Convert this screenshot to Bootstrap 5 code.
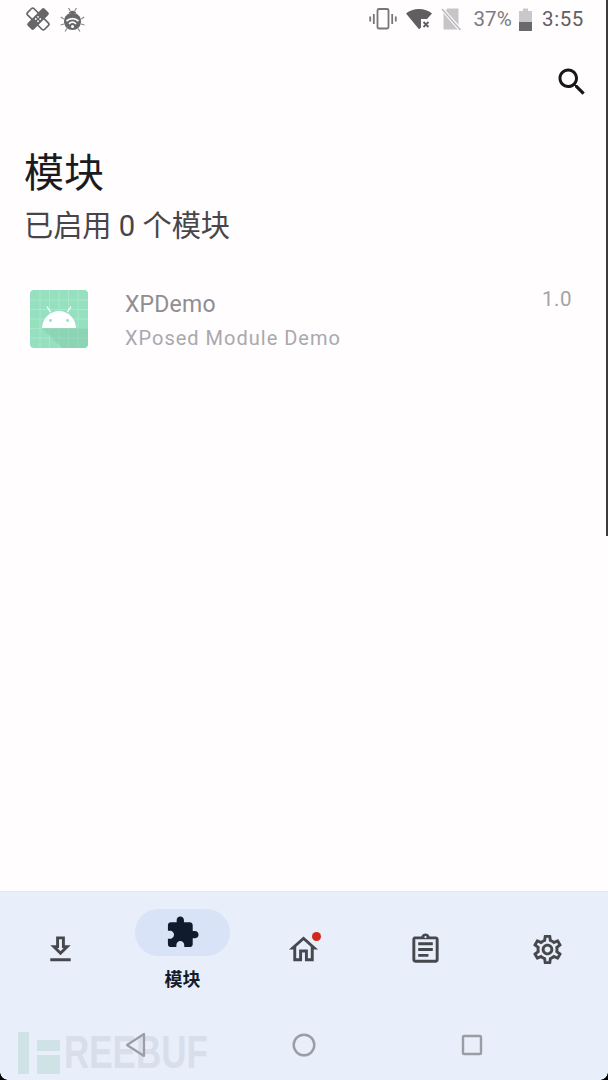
<!DOCTYPE html>
<html lang="zh-CN">
<head>
  <meta charset="UTF-8">
  <title>模块</title>
  <link href="https://cdn.jsdelivr.net/npm/bootstrap@5.3.3/dist/css/bootstrap.min.css" rel="stylesheet">
  <style>
    html, body { height: 100%; }
    body {
      background: #fffdfe;
      font-family: Roboto, "Noto Sans CJK SC", sans-serif;
      overflow: hidden;
    }
    .screen { height: 1080px; width: 608px; }

    /* status bar */
    .status-bar { height: 38px; padding: 0 24px 0 26px; font-size: 20.5px; color: #7b7b7d; }
    .status-bug { margin-left: 10px; }
    .status-time { color: #5f5f61; font-weight: 400; letter-spacing: .6px; }
    .status-pct { margin-left: 11px; letter-spacing: .2px; }
    .status-batt { margin: 0 10px 0 7px; }

    /* header */
    .tool-row { height: 88px; padding-right: 18px; }
    .page-title { font-family: "Noto Sans CJK SC", sans-serif; font-size: 40px; line-height: 54px; color: #1b1b1f; font-weight: 400; margin: 17px 0 0 24px; }
    .page-sub { font-family: Roboto, "Noto Sans CJK SC", sans-serif; font-size: 29.2px; line-height: 40px; color: #46464a; margin: 9px 0 0 24px; }

    /* module row */
    .module-row { margin-top: 43px; padding: 0 36px 0 29px; }
    .module-body { margin-left: 36px; }
    .module-name { font-size: 23px; line-height: 30px; color: #8e8e90; margin-top: 1px; letter-spacing: .2px; }
    .module-desc { font-size: 20px; line-height: 28px; color: #a9a9ad; margin-top: 4px; letter-spacing: 1px; }
    .module-ver { font-size: 20.5px; line-height: 28px; color: #a3a3a6; letter-spacing: .5px; margin-top: -4px; }

    /* bottom nav */
    .bottom-wrap { background: #e8eefa; position: relative; border-top: 1px solid #e5e9f2; }
    .nav-line { height: 115px; }
    .nav-cell { flex: 1 1 0; }
    .nav-pill-on { width: 95px; height: 47px; border-radius: 24px; background: #d8e3f8; }
    .nav-label { font-family: "Noto Sans CJK SC", sans-serif; font-size: 18px; font-weight: 700; line-height: 24px; color: #141c2b; margin-top: 10px; }
    .nav-ico { position: relative; width: 35px; height: 35px; display: block; }
    .red-dot { position: absolute; top: 0; right: 0; width: 9px; height: 9px; border-radius: 50%; background: #d2281b; }
    .sys-bar { height: 73px; padding: 3px 52px 0; position: relative; }
    .sys-cell { flex: 1 1 0; }

    /* overlays */
    .scroll-thumb { position: absolute; top: 0; right: 0; width: 2px; height: 536px; background: #3c3c3c; }
    .mark-box { position: absolute; left: 18px; top: 140px; height: 42px; pointer-events: none; }
    .mark-word { position: absolute; left: 46px; top: -6px; font-family: "Liberation Sans", sans-serif; font-weight: 700; font-size: 46px; line-height: 52px; color: #d8dfea; transform: scaleX(.76); transform-origin: left center; }
    .corner-l, .corner-r { position: absolute; bottom: 0; width: 8px; height: 8px; }
    .corner-l { left: 0; background: radial-gradient(circle at 100% 0, transparent 7.5px, #000 8px); }
    .corner-r { right: 0; background: radial-gradient(circle at 0 0, transparent 7.5px, #000 8px); }
  </style>
</head>
<body>

<div class="screen d-flex flex-column position-relative">

  <!-- Status bar -->
  <div class="status-bar d-flex align-items-center">
    <svg width="24" height="24" viewBox="0 0 24 24">
      <rect x="7.500" y="0" width="9" height="24" rx="2" transform="rotate(-45 12 12)" fill="#fffdfe" stroke="#67676a" stroke-width="1.700"/>
      <rect x="7.500" y="0" width="9" height="24" rx="2" transform="rotate(45 12 12)" fill="#67676a"/>
      <circle cx="12" cy="9.800" r=".9" fill="#fff"/><circle cx="12" cy="14.200" r=".9" fill="#fff"/><circle cx="9.800" cy="12" r=".9" fill="#fff"/><circle cx="14.200" cy="12" r=".9" fill="#fff"/>
    </svg>
    <svg class="status-bug" width="25" height="25" viewBox="0 0 25 25">
      <path d="M8.500 6.500c.800-2 2.200-2.800 4-2.800s3.200.800 4 2.800z" fill="#67676a"/>
      <path d="M12.500 6c5 0 8.500 3.500 8.500 8.500 0 5-3.800 8.500-8.500 8.500S4 19.500 4 14.500C4 9.500 7.500 6 12.500 6z" fill="#67676a"/>
      <path d="M8.500 1l1.800 3M16.500 1l-1.800 3M.800 10l3 2M24.200 10l-3 2M.500 18l3.500-1M24.500 18l-3.500-1M5 24.500l2-3M20 24.500l-2-3" stroke="#8a8a8c" stroke-width="1.200" fill="none"/>
      <path d="M6.500 14c3.500-3.200 8.500-3.200 12 0M9 16.800c2.200-2 4.800-2 7 0" stroke="#fff" stroke-width="1.700" fill="none"/>
      <circle cx="12.500" cy="19.500" r="1.500" fill="#fff"/>
    </svg>
    <div class="flex-grow-1"></div>
    <svg width="28" height="24" viewBox="0 0 28 24" fill="none" stroke="#77777a" stroke-width="1.800">
      <rect x="8.500" y="2" width="11" height="19.500" rx="1.500"/>
      <path d="M4.800 7v10M23.200 7v10M1.200 9.500v5M26.800 9.500v5"/>
    </svg>
    <svg class="ms-2" width="28" height="24" viewBox="0 0 28 24">
      <path d="M1 6.500C4.500 3.500 9 2 14 2s9.500 1.500 13 4.500l-5 5.500h-6v8.500l-2 1.800z" fill="#5f5f62"/>
      <path d="M18.500 15l5 5M23.500 15l-5 5" stroke="#5f5f62" stroke-width="1.800"/>
    </svg>
    <svg class="ms-2" width="21" height="24" viewBox="0 0 21 24">
      <path d="M6.500 1.500h11v21h-15V6z" fill="#c6c6c8"/>
      <path d="M1 2l18.500 21" stroke="#fffdfe" stroke-width="3.500"/>
      <path d="M1 2l18.500 21" stroke="#b5b5b7" stroke-width="1.300"/>
    </svg>
    <span class="status-pct">37%</span>
    <svg class="status-batt" width="13" height="23" viewBox="0 0 13 23">
      <path d="M4 .500h5V3h3.500a.500.500 0 0 1 .500.500V22.500a.500.500 0 0 1-.500.500H.500a.500.500 0 0 1-.500-.500V3.500A.500.500 0 0 1 .500 3H4z" fill="#c9c9cb"/>
      <path d="M0 14h13v8.500a.500.500 0 0 1-.500.500H.500a.500.500 0 0 1-.500-.500z" fill="#6a6a6c"/>
    </svg>
    <span class="status-time">3:55</span>
  </div>

  <!-- Toolbar -->
  <div class="tool-row d-flex justify-content-end align-items-center">
    <svg width="36" height="36" viewBox="0 0 24 24" fill="#17171a"><path d="M15.500 14h-.790l-.280-.270C15.410 12.590 16 11.110 16 9.500 16 5.910 13.090 3 9.500 3S3 5.910 3 9.500 5.910 16 9.500 16c1.610 0 3.090-.590 4.230-1.570l.270.280v.790l5 4.990L20.490 19l-4.990-5zm-6 0C7.010 14 5 11.990 5 9.500S7.010 5 9.500 5 14 7.010 14 9.500 11.990 14 9.500 14z"/></svg>
  </div>

  <h1 class="page-title">模块</h1>
  <div class="page-sub">已启用 0 个模块</div>

  <!-- Module list -->
  <div class="module-row d-flex align-items-start">
    <svg width="60" height="60" viewBox="0 0 60 60">
      <rect x="1" y="1" width="58" height="58" rx="4" fill="#95e0bf"/>
      <path d="M11 1v58M20.500 1v58M30 1v58M39.500 1v58M49 1v58M1 11h58M1 20.500h58M1 30h58M1 39.500h58M1 49h58" stroke="#aee8ce" stroke-width=".9"/>
      <path d="M13 39L33 59h22a4 4 0 0 0 4-4V39z" fill="#7cc4a5" opacity=".4"/>
      <path d="M21.500 23l-3.500-5.500M38.500 23l3.500-5.500" stroke="#fff" stroke-width="1.300"/>
      <path d="M13 39c0-9 7.500-17 17-17s17 8 17 17z" fill="#fff"/>
      <circle cx="21.500" cy="31.500" r="1.400" fill="#95e0bf"/><circle cx="38.500" cy="31.500" r="1.400" fill="#95e0bf"/>
    </svg>
    <div class="module-body flex-grow-1">
      <div class="module-name">XPDemo</div>
      <div class="module-desc">XPosed Module Demo</div>
    </div>
    <div class="module-ver">1.0</div>
  </div>

  <div class="flex-grow-1"></div>

  <!-- Bottom navigation -->
  <div class="bottom-wrap">
    <!-- Watermark -->
    <div class="mark-box">
      <svg width="44" height="42" viewBox="0 0 44 42" fill="#cfe3e6"><rect width="11" height="42"/><rect x="19" y="8" width="23" height="11"/><rect x="19" y="23" width="23" height="19"/></svg>
      <span class="mark-word">REEBUF</span>
    </div>

    <div class="nav-line d-flex">
      <div class="nav-cell d-flex justify-content-center align-items-center">
        <svg class="nav-ico" viewBox="0 0 24 24" fill="#46484e"><path d="M19 9h-4V3H9v6H5l7 7 7-7zm-8 2V5h2v6h1.170L12 13.170 9.830 11H11zm-6 7h14v2H5z"/></svg>
      </div>
      <div class="nav-cell d-flex flex-column justify-content-center align-items-center">
        <div class="nav-pill-on d-flex justify-content-center align-items-center">
          <svg class="nav-ico" viewBox="0 0 24 24" fill="#101c2e"><path d="M20.500 11H19V7c0-1.100-.900-2-2-2h-4V3.500C13 2.120 11.880 1 10.500 1S8 2.120 8 3.500V5H4c-1.100 0-1.990.900-1.990 2v3.800H3.500c1.490 0 2.700 1.210 2.700 2.700s-1.210 2.700-2.700 2.700H2V20c0 1.100.900 2 2 2h3.800v-1.500c0-1.490 1.210-2.700 2.700-2.700 1.490 0 2.700 1.210 2.700 2.700V22H17c1.100 0 2-.900 2-2v-4h1.500c1.380 0 2.500-1.120 2.500-2.500S21.880 11 20.500 11z"/></svg>
        </div>
        <div class="nav-label">模块</div>
      </div>
      <div class="nav-cell d-flex justify-content-center align-items-center">
        <div class="nav-ico">
          <svg width="35" height="35" viewBox="0 0 24 24" fill="#46484e"><path d="M12 5.690l5 4.500V18h-2v-6H9v6H7v-7.810l5-4.500M12 3L2 12h3v8h6v-6h2v6h6v-8h3L12 3z"/></svg>
          <span class="red-dot"></span>
        </div>
      </div>
      <div class="nav-cell d-flex justify-content-center align-items-center">
        <svg class="nav-ico" viewBox="0 0 24 24" fill="#46484e"><path d="M7 15h7v2H7zm0-4h10v2H7zm0-4h10v2H7zm12-4h-4.180C14.400 1.840 13.300 1 12 1c-1.300 0-2.400.840-2.820 2H5c-.140 0-.270.010-.400.040-.390.080-.740.280-1.010.550-.180.180-.330.400-.430.640-.100.230-.160.490-.160.770v14c0 .270.060.540.160.780s.250.450.430.640c.270.270.620.470 1.010.550.130.020.260.030.400.030h14c1.100 0 2-.900 2-2V5c0-1.100-.900-2-2-2zm-7-.250c.410 0 .750.340.750.750s-.340.750-.750.750-.750-.340-.750-.750.340-.750.750-.750zM19 19H5V5h14v14z"/></svg>
      </div>
      <div class="nav-cell d-flex justify-content-center align-items-center">
        <svg class="nav-ico" viewBox="0 0 24 24" fill="#46484e"><path d="M19.430 12.980c.040-.320.070-.640.070-.980 0-.340-.030-.660-.070-.980l2.110-1.650c.190-.150.240-.420.120-.640l-2-3.460c-.090-.160-.260-.250-.440-.250-.060 0-.120.010-.170.030l-2.490 1c-.520-.400-1.080-.730-1.690-.980l-.380-2.650C14.460 2.180 14.250 2 14 2h-4c-.250 0-.460.180-.490.420l-.380 2.650c-.610.250-1.170.590-1.690.980l-2.490-1c-.060-.020-.120-.030-.180-.030-.170 0-.340.090-.430.250l-2 3.460c-.130.220-.070.490.120.640l2.110 1.650c-.040.320-.070.650-.070.980 0 .330.030.660.070.980l-2.110 1.650c-.190.150-.240.420-.120.640l2 3.460c.090.160.260.250.440.250.060 0 .120-.010.170-.030l2.490-1c.520.400 1.080.730 1.690.980l.380 2.650c.030.240.240.420.490.420h4c.250 0 .460-.180.490-.420l.380-2.650c.610-.250 1.170-.590 1.690-.980l2.490 1c.060.020.120.030.180.030.170 0 .340-.090.430-.250l2-3.460c.120-.220.070-.490-.120-.640l-2.110-1.650zm-1.980-1.710c.040.310.050.520.050.730 0 .210-.020.430-.050.730l-.140 1.130.890.700 1.080.84-.700 1.210-1.270-.510-1.040-.420-.900.680c-.430.320-.840.560-1.250.730l-1.060.43-.160 1.130-.200 1.350h-1.400l-.190-1.350-.160-1.130-1.060-.43c-.430-.180-.830-.410-1.230-.710l-.910-.700-1.060.43-1.270.510-.700-1.210 1.080-.84.890-.700-.140-1.130c-.030-.310-.050-.540-.050-.740s.020-.430.050-.730l.140-1.130-.890-.700-1.080-.84.700-1.210 1.270.510 1.040.42.900-.68c.430-.320.840-.560 1.250-.73l1.060-.43.160-1.130.200-1.350h1.390l.190 1.350.160 1.130 1.060.43c.430.180.830.410 1.230.710l.91.700 1.060-.43 1.270-.51.700 1.210-1.070.85-.89.700.14 1.130zM12 8c-2.210 0-4 1.790-4 4s1.790 4 4 4 4-1.790 4-4-1.790-4-4-4zm0 6c-1.100 0-2-.900-2-2s.900-2 2-2 2 .900 2 2-.900 2-2 2z"/></svg>
      </div>
    </div>

    <!-- System buttons -->
    <div class="sys-bar d-flex align-items-center">
      <div class="sys-cell d-flex justify-content-center">
        <svg width="24" height="28" viewBox="0 0 24 28" fill="none" stroke="#9a9da4" stroke-width="2.200" stroke-linejoin="round"><path d="M20 3v22L3 14z"/></svg>
      </div>
      <div class="sys-cell d-flex justify-content-center">
        <svg width="26" height="26" viewBox="0 0 26 26" fill="none" stroke="#9a9da4" stroke-width="2.400"><circle cx="13" cy="13" r="10.300"/></svg>
      </div>
      <div class="sys-cell d-flex justify-content-center">
        <svg width="22" height="22" viewBox="0 0 22 22" fill="none" stroke="#9a9da4" stroke-width="2.400"><rect x="2" y="2" width="18" height="18" rx="1"/></svg>
      </div>
    </div>

    <div class="corner-l"></div>
    <div class="corner-r"></div>
  </div>

  <div class="scroll-thumb"></div>
</div>

<script src="https://cdn.jsdelivr.net/npm/bootstrap@5.3.3/dist/js/bootstrap.bundle.min.js"></script>
</body>
</html>
